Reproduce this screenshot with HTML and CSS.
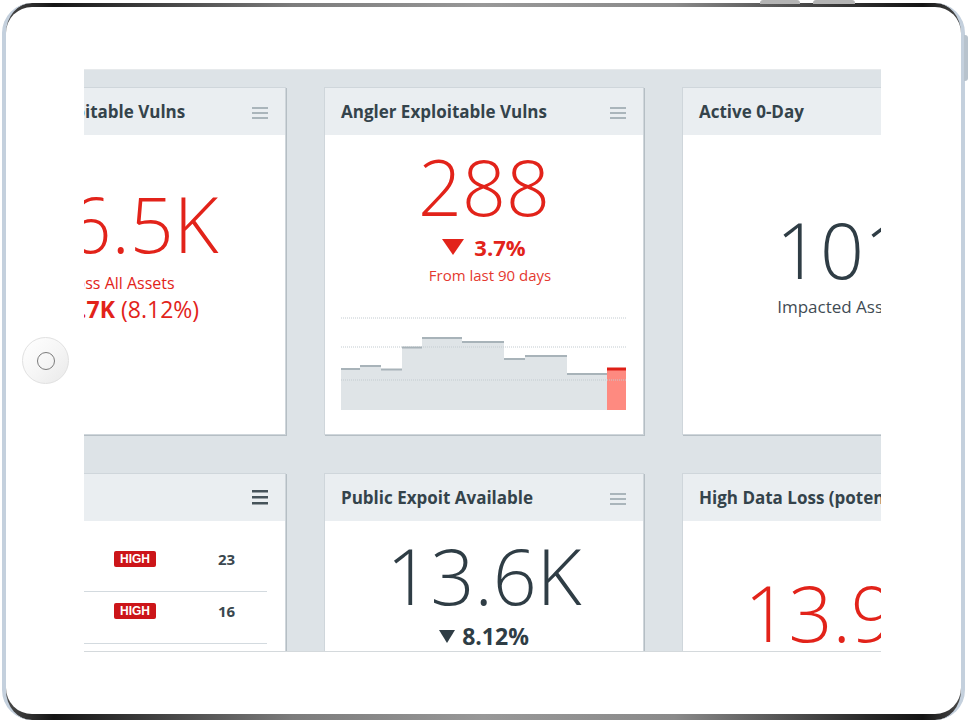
FILE: index.html
```html
<!DOCTYPE html>
<html>
<head>
<meta charset="utf-8">
<title>Dashboard</title>
<link rel="stylesheet" href="styles.css">
</head>
<body>
<div class="device">
  <span class="btn-top btn-top-1"></span>
  <span class="btn-top btn-top-2"></span>
  <span class="btn-side"></span>
  <div class="bezel">
    <div class="home"><span class="home-ring"></span></div>
    <div class="screen">
      <div class="grid">

        <section class="card">
          <header class="card-head">
            <h2>Public Exploitable Vulns</h2>
            <svg class="menu" width="16" height="12" viewBox="0 0 16 12"><rect y="0" width="16" height="2"/><rect y="5" width="16" height="2"/><rect y="10" width="16" height="2"/></svg>
          </header>
          <div class="card-body body-low body-left">
            <div class="big red">16.5K</div>
            <div class="sub red shift">Across All Assets</div>
            <div class="delta delta-mid red"><svg class="tri" width="20" height="15" viewBox="0 0 20 15"><polygon points="0,0 20,0 10,15"/></svg><b>1.7K</b>&nbsp;(8.12%)</div>
          </div>
        </section>

        <section class="card">
          <header class="card-head">
            <h2>Angler Exploitable Vulns</h2>
            <svg class="menu" width="16" height="12" viewBox="0 0 16 12"><rect y="0" width="16" height="2"/><rect y="5" width="16" height="2"/><rect y="10" width="16" height="2"/></svg>
          </header>
          <div class="card-body body-top">
            <div class="big red">288</div>
            <div class="delta red"><svg class="tri" width="22" height="16" viewBox="0 0 22 16"><polygon points="0,0 22,0 11,16"/></svg><b>3.7%</b></div>
            <div class="note red">From last 90 days</div>
            <svg class="chart" width="285" height="93" viewBox="0 0 285 93">
              <path class="area" d="M0 52H19V49H40V52.5H61V30.5H81V21H121V25H163V42H184V39H226V57H266V93H0Z"/>
              <rect class="area-hot" x="266" y="52" width="19" height="41"/>
              <g class="grid-line">
                <line x1="0" y1="1" x2="285" y2="1"/>
                <line x1="0" y1="30" x2="285" y2="30"/>
                <line x1="0" y1="63" x2="285" y2="63"/>
              </g>
              <g class="step">
                <line x1="0" y1="52" x2="19" y2="52"/>
                <line x1="19" y1="49" x2="40" y2="49"/>
                <line x1="40" y1="52.5" x2="61" y2="52.5"/>
                <line x1="61" y1="30.5" x2="81" y2="30.5"/>
                <line x1="81" y1="21" x2="121" y2="21"/>
                <line x1="121" y1="25" x2="163" y2="25"/>
                <line x1="163" y1="42" x2="184" y2="42"/>
                <line x1="184" y1="39" x2="226" y2="39"/>
                <line x1="226" y1="57" x2="266" y2="57"/>
              </g>
              <line class="step-hot" x1="266" y1="52" x2="285" y2="52"/>
            </svg>
          </div>
        </section>

        <section class="card">
          <header class="card-head">
            <h2>Active 0-Day</h2>
            <svg class="menu" width="16" height="12" viewBox="0 0 16 12"><rect y="0" width="16" height="2"/><rect y="5" width="16" height="2"/><rect y="10" width="16" height="2"/></svg>
          </header>
          <div class="card-body body-center">
            <div class="big dark">101</div>
            <div class="sub sub-lg grey">Impacted Assets</div>
          </div>
        </section>

        <section class="card">
          <header class="card-head">
            <h2>Top Threats</h2>
            <svg class="menu menu-dark" width="16" height="15" viewBox="0 0 16 15"><rect y="0" width="16" height="2.5"/><rect y="6" width="16" height="2.5"/><rect y="12" width="16" height="2.5"/></svg>
          </header>
          <div class="card-body body-list">
            <div class="row"><span class="name">Heartbleed</span><span class="badge">HIGH</span><span class="count">23</span></div>
            <div class="row"><span class="name">Shellshock</span><span class="badge">HIGH</span><span class="count">16</span></div>
            <div class="row"><span class="name">POODLE</span><span class="badge">HIGH</span><span class="count">9</span></div>
          </div>
        </section>

        <section class="card">
          <header class="card-head">
            <h2>Public Expoit Available</h2>
            <svg class="menu" width="16" height="12" viewBox="0 0 16 12"><rect y="0" width="16" height="2"/><rect y="5" width="16" height="2"/><rect y="10" width="16" height="2"/></svg>
          </header>
          <div class="card-body body-top body-top-2">
            <div class="big dark">13.6K</div>
            <div class="delta delta-dark dark"><svg class="tri" width="16" height="13" viewBox="0 0 16 13"><polygon points="0,0 16,0 8,13"/></svg><b>8.12%</b></div>
          </div>
        </section>

        <section class="card">
          <header class="card-head">
            <h2>High Data Loss (potential)</h2>
            <svg class="menu" width="16" height="12" viewBox="0 0 16 12"><rect y="0" width="16" height="2"/><rect y="5" width="16" height="2"/><rect y="10" width="16" height="2"/></svg>
          </header>
          <div class="card-body body-low body-low-2">
            <div class="big red">13.9K</div>
            <div class="sub red">Across All Assets</div>
          </div>
        </section>

      </div>
    </div>
  </div>
</div>
</body>
</html>
```

FILE: styles.css
```css
* { box-sizing: border-box; margin: 0; padding: 0; }

html, body { background: #ffffff; }

body {
  width: 968px;
  height: 720px;
  overflow: hidden;
  padding: 3px 0 0 2px;
  font-family: "Open Sans", "Liberation Sans", sans-serif;
  font-stretch: 92%;
}

/* ---------- tablet frame ---------- */
.device {
  position: relative;
  width: 963px;
  height: 717px;
  border-radius: 30px;
  padding: 4px 0 6px;
  border-left: 4px solid #c4d0dd;
  border-right: 4px solid #c4d0dd;
  background: linear-gradient(90deg, #4a4a4a 0%, #151515 5%, #3a3a3a 14%, #7c7c7c 30%, #989898 50%, #8a8a8a 70%, #2a2a2a 90%, #141414 96%, #4a4a4a 100%);
}

.btn-top {
  position: absolute;
  top: -3px;
  height: 4px;
  background: #b4b4b4;
  border-radius: 3px 3px 0 0;
}
.btn-top-1 { left: 754px; width: 40px; }
.btn-top-2 { left: 807px; width: 42px; }

.btn-side {
  position: absolute;
  right: -7px;
  top: 32px;
  width: 4px;
  height: 46px;
  background: #b8c3cd;
  border-radius: 0 3px 3px 0;
}

.bezel {
  height: 100%;
  background: #ffffff;
  border-radius: 26px;
  display: flex;
  align-items: center;
}

.home {
  flex: none;
  width: 47px;
  height: 47px;
  margin-left: 16px;
  border-radius: 50%;
  border: 1px solid #e1e1e1;
  background: linear-gradient(135deg, #ffffff 0%, #f6f6f6 50%, #e9e9e9 100%);
  display: flex;
  align-items: center;
  justify-content: center;
}
.home-ring {
  width: 18px;
  height: 18px;
  border-radius: 50%;
  border: 1.6px solid #7b7b7b;
}

/* ---------- screen ---------- */
.screen {
  flex: none;
  width: 797px;
  height: 583px;
  margin-left: 15px;
  overflow: hidden;
  background: #dde3e7;
  border-top: 1px solid #e7eaec;
  border-bottom: 1px solid #d4d9dc;
}

.grid {
  display: grid;
  grid-template-columns: repeat(3, 320px);
  grid-auto-rows: 348px;
  gap: 38px;
  width: max-content;
  margin: 17px 0 0 -118px;
}

.card {
  background: #ffffff;
  border: 1px solid #cfd6db;
  box-shadow: 1px 1px 0 #b5bec4;
  display: flex;
  flex-direction: column;
  overflow: hidden;
  min-width: 0;
}

.card-head {
  flex: none;
  height: 47px;
  padding: 0 17px 0 16px;
  background: #eaeef1;
  display: flex;
  align-items: center;
  justify-content: space-between;
}
.card-head h2 {
  font-size: 17px;
  font-weight: 700;
  color: #34434b;
  white-space: nowrap;
}
.menu { fill: #aab5bb; flex: none; margin-top: 2px; }
.menu-dark { fill: #46535a; margin-top: 0; }

.card-body {
  flex: 1;
  text-align: center;
  white-space: nowrap;
}
.body-top { padding-top: 13px; }
.body-top-2 { padding-top: 16px; }
.body-low { padding-top: 50px; }
.body-low-2 { padding-top: 53px; }
.body-center { padding-top: 76px; }
.body-left { padding-right: 10px; }

.red { color: #e2231a; }
.dark { color: #2f3d45; }
.grey { color: #3f4c54; }

.big {
  font-size: 77px;
  font-weight: 300;
  line-height: 77px;
}

.sub {
  font-size: 16px;
  line-height: 22px;
  margin-top: 10px;
}
.sub-lg { font-size: 17px; margin-top: 8px; }
.shift { padding-right: 16px; }

.delta {
  display: flex;
  align-items: center;
  justify-content: center;
  font-size: 22px;
  line-height: 26px;
  margin-top: 9px;
}
.delta b { font-weight: 700; }
.delta .tri { fill: currentColor; margin-right: 10px; }
.delta-mid { font-size: 23px; margin-top: 2px; padding-right: 4px; }
.delta-mid .tri { margin-right: 8px; }
.delta-dark { font-size: 23px; margin-top: 9px; }
.delta-dark .tri { margin-right: 7px; }

.note {
  font-size: 15px;
  line-height: 20px;
  margin-top: 5px;
  padding-left: 12px;
  color: #e4392f;
}

.chart {
  display: block;
  margin: 32px 0 0 16px;
}
.area { fill: #dfe4e7; }
.area-hot { fill: #fe8a80; }
.grid-line line { stroke: #c3cbd0; stroke-width: 1; stroke-dasharray: 1 1; }
.step line { stroke: #a8b3b9; stroke-width: 2; }
.step-hot { stroke: #de1f16; stroke-width: 3; }

/* list card */
.body-list { padding: 19px 18px 0 17px; text-align: left; }
.row {
  height: 52px;
  padding-bottom: 14px;
  display: grid;
  grid-template-columns: 130px 104px 1fr;
  align-items: center;
  border-bottom: 1px solid #d3dadf;
}
.name { font-size: 14px; color: #3f4c54; }
.badge {
  justify-self: start;
  width: 42px;
  height: 16px;
  border-radius: 2px;
  background: #cc1519;
  color: #ffffff;
  font-size: 12px;
  font-weight: 700;
  line-height: 16px;
  text-align: center;
  font-family: "Liberation Sans", Arial, sans-serif;
}
.count { font-size: 15px; font-weight: 700; color: #3a474e; }
```
